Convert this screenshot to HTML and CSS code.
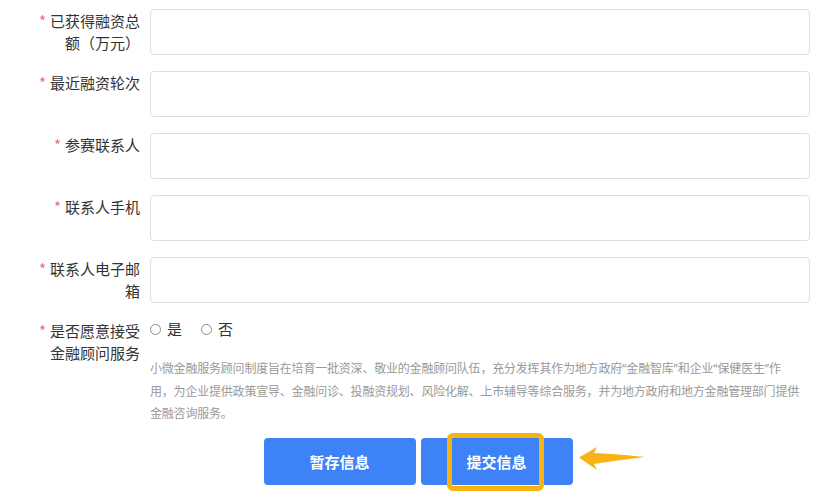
FILE: index.html
```html
<!DOCTYPE html>
<html lang="zh-CN">
<head>
<meta charset="utf-8">
<title>表单</title>
<link rel="stylesheet" href="styles.css">
</head>
<body>
<div class="form">
  <div class="row">
    <div class="label"><span class="req">*</span>已获得融资总额（万元）</div>
    <div class="field"><input class="input" type="text"></div>
  </div>
  <div class="row">
    <div class="label"><span class="req">*</span>最近融资轮次</div>
    <div class="field"><input class="input" type="text"></div>
  </div>
  <div class="row">
    <div class="label"><span class="req">*</span>参赛联系人</div>
    <div class="field"><input class="input" type="text"></div>
  </div>
  <div class="row">
    <div class="label"><span class="req">*</span>联系人手机</div>
    <div class="field"><input class="input" type="text"></div>
  </div>
  <div class="row">
    <div class="label"><span class="req">*</span>联系人电子邮箱</div>
    <div class="field"><input class="input" type="text"></div>
  </div>
  <div class="row">
    <div class="label"><span class="req">*</span>是否愿意接受金融顾问服务</div>
    <div class="field">
      <div class="radios">
        <span class="radio"><span class="dot"></span>是</span>
        <span class="radio"><span class="dot"></span>否</span>
      </div>
      <p class="desc">小微金融服务顾问制度旨在培育一批资深、敬业的金融顾问队伍，充分发挥其作为地方政府<span class="q">“</span>金融智库<span class="q">”</span>和企业<span class="q">“</span>保健医生<span class="q">”</span>作<br>用，为企业提供政策宣导、金融问诊、投融资规划、风险化解、上市辅导等综合服务，并为地方政府和地方金融管理部门提供<br>金融咨询服务。</p>
    </div>
  </div>
  <div class="actions">
    <button class="btn" type="button">暂存信息</button>
    <div class="submit-wrap">
      <button class="btn" type="button">提交信息</button>
      <span class="highlight"></span>
      <svg class="arrow" width="70" height="26" viewBox="0 0 70 26"><path d="M0,10.5 L18,0 L15,6 Q40,7 66,10 Q40,13 15,17 L18,23 Z" fill="#f8b318"/></svg>
    </div>
  </div>
</div>
</body>
</html>
```
FILE: styles.css
```css
* { box-sizing: border-box; }
html, body {
  margin: 0;
  padding: 0;
  background: #ffffff;
}
body {
  font-family: "Noto Sans CJK SC", "Noto Sans", sans-serif;
  color: #333333;
  font-size: 15px;
  min-height: 500px;
}
.form {
  padding-top: 9px;
  padding-bottom: 15px;
  width: 836px;
}
.row {
  display: flex;
  align-items: flex-start;
  margin-bottom: 16px;
}
.label {
  width: 150px;
  flex: none;
  padding: 1px 10px 0 36px;
  text-align: right;
  line-height: 22px;
  font-size: 15px;
  color: #333333;
}
.req {
  color: #f56c6c;
  margin-right: 4px;
}
.field {
  width: 660px;
  flex: none;
}
.input {
  display: block;
  width: 660px;
  height: 46px;
  border: 1px solid #dcdfe6;
  border-radius: 4px;
  background: #ffffff;
  margin: 0;
  padding: 0 12px;
  font: inherit;
  outline: none;
}
.radios {
  display: flex;
  align-items: center;
  height: 20px;
  line-height: 20px;
  font-size: 15px;
}
.radio {
  display: inline-flex;
  align-items: center;
  margin-right: 19px;
}
.dot {
  width: 11px;
  height: 11px;
  border: 1px solid #8a8a8a;
  border-radius: 50%;
  margin-right: 6px;
  background: #fff;
}
.desc {
  margin: 18px 0 0 0;
  font-size: 12px;
  letter-spacing: -0.2px;
  line-height: 22px;
  color: #999999;
  white-space: nowrap;
}
.q {
  font-family: "Noto Sans", sans-serif;
  letter-spacing: 0;
}
.actions {
  display: flex;
  justify-content: center;
  gap: 5px;
  margin-top: -2px;
}
.submit-wrap {
  position: relative;
  width: 152px;
  height: 47px;
}
.btn {
  display: block;
  width: 152px;
  height: 47px;
  border: none;
  border-radius: 4px;
  background: #3d82f7;
  color: #ffffff;
  font-family: "Noto Sans CJK SC", sans-serif;
  font-size: 15px;
  font-weight: bold;
  padding: 0;
  margin: 0;
}
.highlight {
  position: absolute;
  z-index: 1;
  left: 26px;
  top: -5px;
  width: 97px;
  height: 58px;
  border: 5px solid #f7b50c;
  border-radius: 6px;
}
.arrow {
  position: absolute;
  left: 158px;
  top: 9px;
}
```
